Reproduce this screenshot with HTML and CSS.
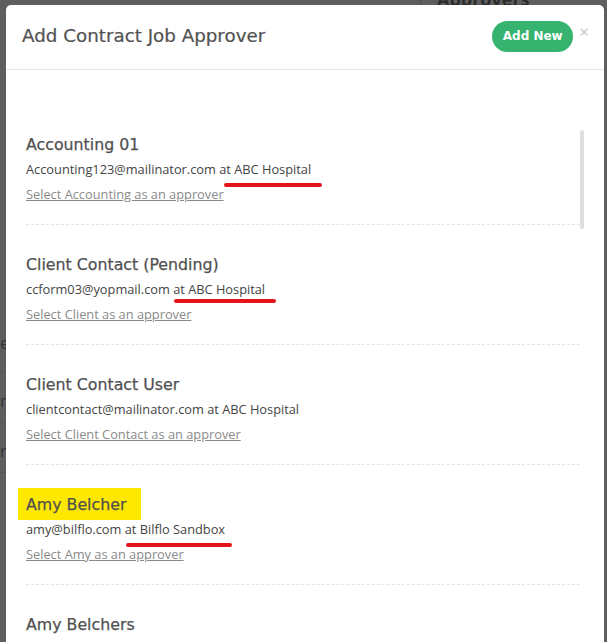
FILE: index.html
```html
<!DOCTYPE html>
<html lang="en">
<head>
    <meta charset="UTF-8">
    <meta name="viewport" content="width=device-width, initial-scale=1.0">
    <title>Add Contract Job Approver</title>
    <link rel="stylesheet" href="styles.css">
</head>
<body>
    <div class="page">
        <div class="page-top">
            <span class="page-title">Approvers</span>
        </div>
        <div class="page-rows">
            <div class="page-row">e</div>
            <div class="page-row">r</div>
            <div class="page-row">n</div>
        </div>
    </div>

    <div class="modal">
        <div class="modal-header">
            <h2 class="modal-title">Add Contract Job Approver</h2>
            <button class="btn-add">Add New</button>
            <span class="close">&times;</span>
        </div>
        <div class="modal-body">
            <div class="scroll-thumb"></div>
            <ul class="approvers">
                <li class="approver">
                    <div class="name">Accounting 01</div>
                    <div class="email">Accounting123@mailinator.com at ABC Hospital</div>
                    <a class="select" href="#">Select Accounting as an approver</a>
                    <span class="mark mark-1"></span>
                </li>
                <li class="approver">
                    <div class="name">Client Contact (Pending)</div>
                    <div class="email">ccform03@yopmail.com at ABC Hospital</div>
                    <a class="select" href="#">Select Client as an approver</a>
                    <span class="mark mark-2"></span>
                </li>
                <li class="approver">
                    <div class="name">Client Contact User</div>
                    <div class="email">clientcontact@mailinator.com at ABC Hospital</div>
                    <a class="select" href="#">Select Client Contact as an approver</a>
                </li>
                <li class="approver">
                    <div class="name"><span class="highlight">Amy Belcher</span></div>
                    <div class="email">amy@bilflo.com at Bilflo Sandbox</div>
                    <a class="select" href="#">Select Amy as an approver</a>
                    <span class="mark mark-3"></span>
                </li>
                <li class="approver">
                    <div class="name">Amy Belchers</div>
                    <div class="email">amy2@bilflo.com at Bilflo Sandbox</div>
                    <a class="select" href="#">Select Amy as an approver</a>
                </li>
            </ul>
        </div>
    </div>
</body>
</html>
```

FILE: styles.css
```css
body {
    margin: 0;
    height: 642px;
    overflow: hidden;
    background: #5e5e5e;
    font-family: "Open Sans", Arial, sans-serif;
    position: relative;
}

.page {
    height: 642px;
}
.page-top {
    height: 5px;
    border-left: 1px solid #4e4e4e;
    margin-left: 420px;
    padding-left: 16px;
    overflow: hidden;
}
.page-title {
    display: block;
    margin-top: -13px;
    font-size: 18px;
    font-weight: bold;
    color: #2c2c2c;
}
.page-rows {
    padding-top: 318px;
}
.page-row {
    height: 49px;
    border-bottom: 1px solid #555;
    font-size: 16px;
    color: #333;
    text-align: right;
    width: 6px;
    overflow: hidden;
    line-height: 40px;
}
.page-row + .page-row {
    line-height: 56px;
}

.modal {
    position: absolute;
    left: 6px;
    top: 5px;
    width: 598px;
    bottom: 0;
    background: #fff;
    border-radius: 5px 5px 0 0;
    overflow: hidden;
}

.modal-header {
    display: flex;
    align-items: center;
    height: 64px;
    border-bottom: 1px solid #e6e6e6;
    padding: 0 16px;
}
.modal-title {
    flex: 1;
    margin: -4px 0 0 0;
    font-family: "DejaVu Sans", sans-serif;
    font-weight: normal;
    font-size: 18.3px;
    color: #525252;
    -webkit-text-stroke: 0.2px #525252;
}
.btn-add {
    height: 31px;
    width: 81px;
    border: none;
    border-radius: 16px;
    background: #35b36f;
    color: #fff;
    font-family: "DejaVu Sans", sans-serif;
    font-weight: bold;
    font-size: 12px;
    cursor: pointer;
    margin-right: 6px;
    margin-top: -2px;
}
.close {
    font-size: 17px;
    color: #c4c4c4;
    margin-top: -12px;
    margin-right: -1px;
}

.modal-body {
    position: relative;
    padding: 35px 24px 0 20px;
}
.scroll-thumb {
    position: absolute;
    right: 20px;
    top: 60px;
    width: 4px;
    height: 99px;
    border-radius: 2px;
    background: #dedede;
}

.approvers {
    list-style: none;
    margin: 0;
    padding: 0;
}
.approver {
    position: relative;
    padding: 29px 0 20px;
    border-bottom: 1px dashed #e4e4e4;
}
.name {
    font-family: "DejaVu Sans", sans-serif;
    font-size: 15.8px;
    line-height: 22px;
    color: #505050;
    -webkit-text-stroke: 0.25px #505050;
    margin-bottom: 3px;
}
.highlight {
    background: #ffe800;
    padding: 7px 15px 6px 8px;
    margin-left: -8px;
}
.email {
    font-size: 12.8px;
    line-height: 20px;
    color: #444;
    margin-bottom: 5px;
}
.select {
    display: block;
    font-size: 12.8px;
    line-height: 20px;
    color: #8a8a8a;
}

.mark {
    position: absolute;
    height: 4px;
    border-radius: 2px;
    background: #e3141c;
}
.mark-1 {
    left: 198px;
    width: 98px;
    top: 78px;
}
.mark-2 {
    left: 148px;
    width: 102px;
    top: 74px;
}
.mark-3 {
    left: 100px;
    width: 106px;
    top: 78px;
}
```
